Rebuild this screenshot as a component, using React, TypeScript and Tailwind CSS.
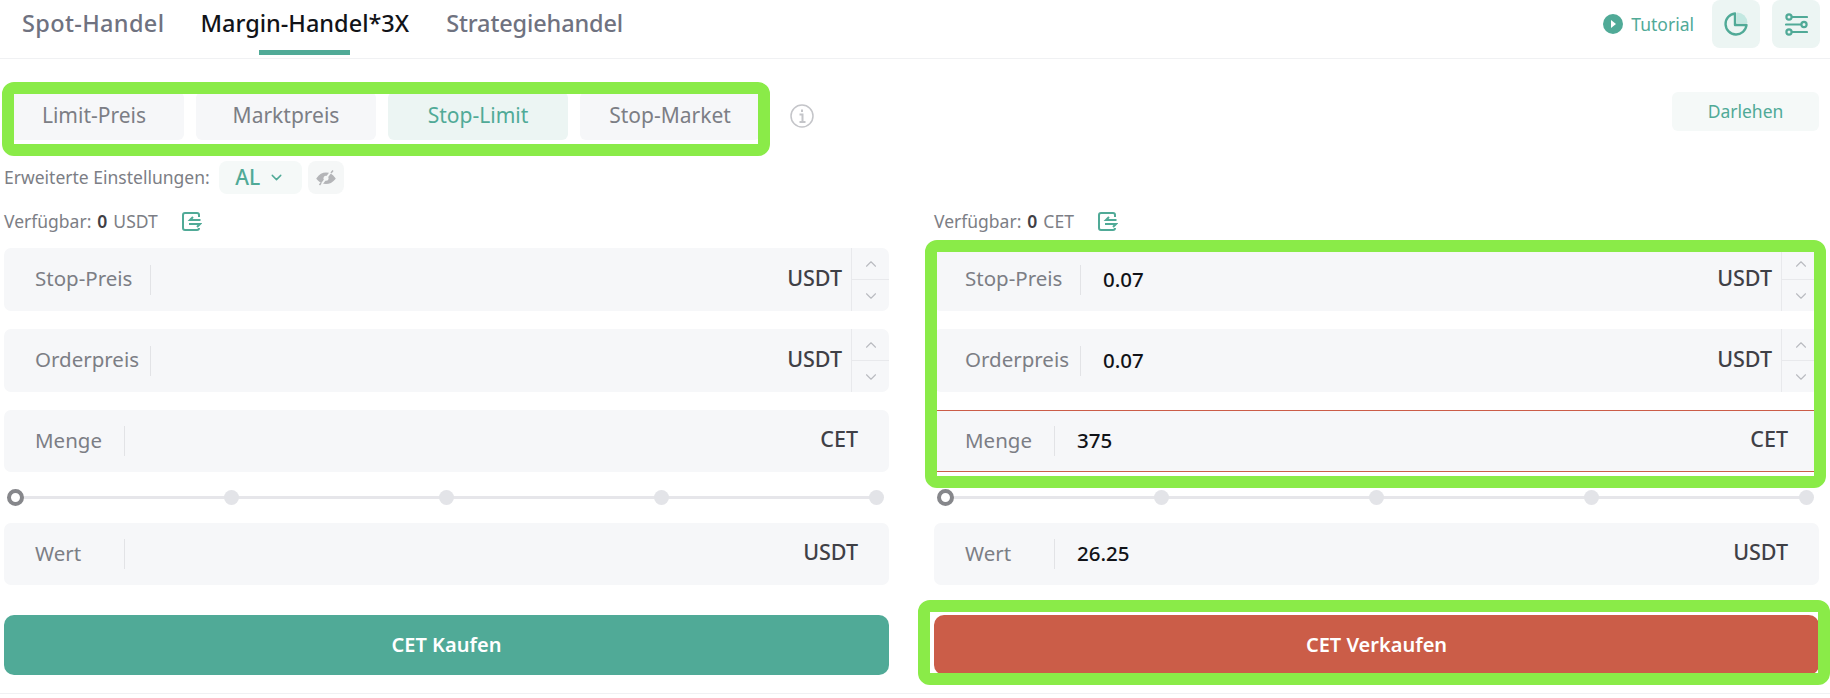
import { ChevronDown, ChevronUp } from 'lucide-react';

const FONT = "font-['Noto_Sans',sans-serif]";

function WalletIcon() {
  return (
    <svg width="20" height="19" viewBox="0 0 20 19" fill="none" stroke="#50aa97" strokeWidth="2">
      <path d="M17 5V3a2 2 0 0 0-2-2H3a2 2 0 0 0-2 2v13a2 2 0 0 0 2 2h12a2 2 0 0 0 2-2" />
      <path d="M18.5 8H8l3-3M7 12h11l-3 3" />
    </svg>
  );
}

function Field({
  label,
  unit,
  value,
  stepper,
  invalid,
  tall,
}: {
  label: string;
  unit: string;
  value?: string;
  stepper?: boolean;
  invalid?: boolean;
  tall?: boolean;
}) {
  return (
    <div
      className={`flex items-center bg-[#f6f7f9] overflow-hidden ${tall ? 'h-[63px]' : 'h-[62px]'} ${invalid ? 'border-y border-[#cb5d48] rounded-[2px]' : 'rounded-[7px]'}`}
    >
      <span className={`pl-[31px] pb-[2px] h-[30px] flex items-center border-r border-[#e2e3e6] text-[20.5px] text-[#7c7e85] whitespace-nowrap ${tall ? 'w-[147px]' : 'w-[121px]'}`}>
        {label}
      </span>
      <span className="flex-1 pl-[22px] pb-[1px] text-[20.5px] font-medium text-[#111318]">{value}</span>
      <span className={`pb-[3px] text-[21.5px] font-medium text-[#3f4046] ${stepper ? 'pr-[9px]' : 'pr-[31px]'}`}>{unit}</span>
      {stepper && (
        <div className="w-[38px] h-full flex flex-col border-l border-[#e8e9ec]">
          <div className="flex-1 flex items-center justify-center border-b border-[#e8e9ec]">
            <ChevronUp className="w-[18px] h-[18px] text-[#b9bbc0]" strokeWidth={1.5} />
          </div>
          <div className="flex-1 flex items-center justify-center">
            <ChevronDown className="w-[18px] h-[18px] text-[#b9bbc0]" strokeWidth={1.5} />
          </div>
        </div>
      )}
    </div>
  );
}

function Slider() {
  return (
    <div className="relative h-[51px] ml-[3px] mr-[5px] flex items-center justify-between">
      <div className="absolute left-[8px] right-[4px] top-[24px] h-[3px] bg-[#e6e6ea]" />
      <div className="relative w-[17px] h-[17px] rounded-full bg-white border-[4px] border-[#86878b]" />
      <div className="relative w-[15px] h-[15px] rounded-full bg-[#e3e4e8]" />
      <div className="relative w-[15px] h-[15px] rounded-full bg-[#e3e4e8]" />
      <div className="relative w-[15px] h-[15px] rounded-full bg-[#e3e4e8]" />
      <div className="relative w-[15px] h-[15px] rounded-full bg-[#e3e4e8]" />
    </div>
  );
}

function Available({ unit }: { unit: string }) {
  return (
    <div className="flex items-center h-[19px] mt-[18px] mb-[17px] text-[17.5px] text-[#7c7e85]">
      <span>Verfügbar:</span>
      <span className="ml-[6px] font-semibold text-[#3f4046]">0</span>
      <span className="ml-[6px]">{unit}</span>
      <span className="ml-[24px]">
        <WalletIcon />
      </span>
    </div>
  );
}

export default function App() {
  return (
    <div className={`w-[1830px] h-[698px] bg-white overflow-hidden ${FONT}`}>
      {/* Tabs */}
      <header className="h-[59px] flex justify-between pl-[22px] pr-[10px] border-b border-[#f0f1f3]">
        <nav className="flex pt-[6px] text-[23.5px] font-medium text-[#6f7280]">
          <span className="tracking-[0.35px]">Spot-Handel</span>
          <span className="relative ml-[36px] text-[#111318]">
            Margin-Handel*3X
            <span className="absolute left-[59px] top-[44px] w-[91px] h-[5px] bg-[#50aa97]" />
          </span>
          <span className="ml-[37px] tracking-[-0.15px]">Strategiehandel</span>
        </nav>
        <div className="flex items-start gap-[12px]">
          <div className="h-[48px] flex items-center gap-[8px] mr-[6px] text-[17.5px] text-[#50aa97]">
            <svg width="20" height="20" viewBox="0 0 20 20">
              <circle cx="10" cy="10" r="10" fill="#50aa97" />
              <path d="M8 6l5 4-5 4z" fill="white" />
            </svg>
            Tutorial
          </div>
          <div className="w-[48px] h-[48px] rounded-[8px] bg-[#ecf5f3] flex items-center justify-center">
            <svg width="24" height="24" viewBox="0 0 24 24" fill="none">
              <path d="M13 .5V11h10.5A10.5 10.5 0 0 0 13 .5z" fill="#c3e8e1" />
              <path d="M11 1.5A10.5 10.5 0 1 0 22.5 13H11z" stroke="#50aa97" strokeWidth="2.4" strokeLinejoin="round" />
            </svg>
          </div>
          <div className="w-[48px] h-[48px] rounded-[8px] bg-[#ecf5f3] flex items-center justify-center">
            <svg width="23" height="23" viewBox="0 0 23 23" fill="none" stroke="#50aa97" strokeWidth="2.2" strokeLinecap="round">
              <circle cx="4" cy="4" r="2.6" />
              <path d="M7 4h15" />
              <circle cx="19" cy="11.5" r="2.6" />
              <path d="M1 11.5h15" />
              <circle cx="4" cy="19" r="2.6" />
              <path d="M7 19h15" />
            </svg>
          </div>
        </div>
      </header>

      {/* Order type */}
      <div className="flex justify-between items-start mt-[33px] pl-[4px] pr-[11px]">
        <div className="flex items-center">
          <div className="relative flex gap-[12px] text-[21px] text-[#7c7e85]">
            <div className="w-[180px] h-[48px] rounded-[6px] bg-[#f6f7f9] flex items-center justify-center">Limit-Preis</div>
            <div className="w-[180px] h-[48px] rounded-[6px] bg-[#f6f7f9] flex items-center justify-center">Marktpreis</div>
            <div className="w-[180px] h-[48px] rounded-[6px] bg-[#ecf5f3] text-[#50aa97] flex items-center justify-center">Stop-Limit</div>
            <div className="w-[180px] h-[48px] rounded-[6px] bg-[#f6f7f9] flex items-center justify-center">Stop-Market</div>
            <div className="absolute -left-[2px] -right-[10px] -top-[10px] -bottom-[16px] border-[12px] border-[#8aeb48] rounded-[12px]" />
          </div>
          <svg className="ml-[30px]" width="24" height="24" viewBox="0 0 24 24" fill="none" stroke="#c4c5c9" strokeWidth="1.5">
            <circle cx="12" cy="12" r="11" />
            <path d="M12 5.5v2.500M9.500 10.500H12.500V18M9.500 18h6" strokeWidth="2" />
          </svg>
        </div>
        <div className="w-[147px] h-[39px] rounded-[6px] bg-[#f5f9f8] flex items-center justify-center text-[17.5px] text-[#50aa97]">
          Darlehen
        </div>
      </div>

      {/* Advanced settings */}
      <div className="flex items-center h-[33px] mt-[21px] pl-[4px] text-[17.5px] text-[#7c7e85]">
        <span>Erweiterte Einstellungen:</span>
        <div className="ml-[9px] w-[83px] h-[33px] rounded-[8px] bg-[#f5f9f8] flex items-center justify-center gap-[8px] text-[21px] font-medium text-[#50aa97]">
          AL
          <ChevronDown className="w-[17px] h-[17px]" strokeWidth={2} />
        </div>
        <div className="ml-[6px] w-[36px] h-[33px] rounded-[8px] bg-[#f5f7f7] flex items-center justify-center">
          <svg width="20" height="16" viewBox="0 0 20 16" fill="none" stroke="#b4b5b8" strokeWidth="2">
            <path d="M1.500 8.500C4 5 7 3.500 10 3.500s6 1.500 8.500 5c-2.500 3-5.500 4.500-8.500 4.500s-6-1.500-8.500-4.500z" fill="#b4b5b8" />
            <circle cx="10" cy="8.300" r="2.500" fill="#f5f7f7" stroke="none" />
            <path d="M15.500 1L5 15" stroke="#f5f7f7" strokeWidth="2" />
            <path d="M17 .5L15 3M5 13L3.500 15" strokeWidth="1.500" />
          </svg>
        </div>
      </div>

      {/* Buy / sell */}
      <div className="grid grid-cols-2 gap-[45px] pl-[4px] pr-[11px]">
        <div>
          <Available unit="USDT" />
          <div className="flex flex-col gap-[18px]">
            <Field label="Stop-Preis" unit="USDT" stepper tall />
            <Field label="Orderpreis" unit="USDT" stepper tall />
            <Field label="Menge" unit="CET" />
          </div>
          <Slider />
          <Field label="Wert" unit="USDT" />
          <div className="mt-[30px] h-[60px] rounded-[10px] bg-[#50aa97] flex items-center justify-center text-[20px] font-semibold text-white">
            CET Kaufen
          </div>
        </div>
        <div>
          <Available unit="CET" />
          <div className="relative flex flex-col gap-[18px]">
            <Field label="Stop-Preis" unit="USDT" value="0.07" stepper tall />
            <Field label="Orderpreis" unit="USDT" value="0.07" stepper tall />
            <Field label="Menge" unit="CET" value="375" invalid />
            <div className="absolute -left-[9px] -right-[7px] -top-[8px] -bottom-[16px] border-[12px] border-[#8aeb48] rounded-[12px]" />
          </div>
          <Slider />
          <Field label="Wert" unit="USDT" value="26.25" />
          <div className="relative mt-[30px] h-[60px] rounded-[10px] bg-[#cb5d48] flex items-center justify-center text-[20px] font-semibold text-white">
            CET Verkaufen
            <div className="absolute -left-[16px] -right-[11px] -top-[15px] -bottom-[10px] border-[12px] border-[#8aeb48] rounded-[12px]" />
          </div>
        </div>
      </div>

      <div className="mt-[18px] h-px bg-[#f0f1f3]" />
    </div>
  );
}
